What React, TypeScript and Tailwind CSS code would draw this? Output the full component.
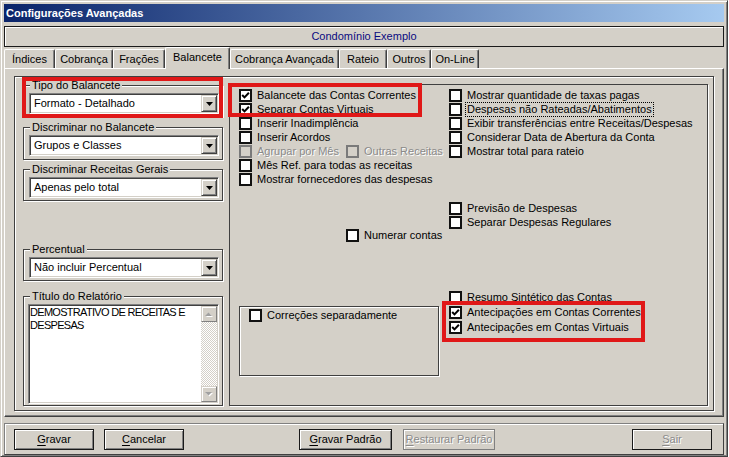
import React from 'react';

type RowProps = { label: string; checked?: boolean; disabled?: boolean; focus?: boolean; className?: string };

function Check({ checked = false, disabled = false }: { checked?: boolean; disabled?: boolean }) {
  return (
    <span
      className={
        disabled
          ? 'relative block w-[13px] h-[13px] shrink-0 border-2 border-[#7a7a7a] bg-[#d4d0c8]'
          : 'relative block w-[13px] h-[13px] shrink-0 border-2 border-[#111111] bg-white'
      }
    >
      {checked && (
        <svg viewBox="0 0 9 9" width="9" height="9" className="absolute left-0 top-0">
          <path d="M1.2 4 L3.5 6.4 L7.9 1.8" stroke="#000" strokeWidth="2" fill="none" />
        </svg>
      )}
    </span>
  );
}

function Row({ label, checked, disabled, focus, className = '' }: RowProps) {
  return (
    <div className={`flex items-center h-[14px] gap-[5px] whitespace-nowrap ${className}`}>
      <Check checked={checked} disabled={disabled} />
      {disabled ? (
        <span className="text-[#8a8a8a] [text-shadow:1px_1px_0_#ffffff]">{label}</span>
      ) : focus ? (
        <span className="outline-1 outline-dotted outline-[#000000] px-[1px] -ml-[1px] leading-[13px]">{label}</span>
      ) : (
        <span>{label}</span>
      )}
    </div>
  );
}

function Group({ label, className = '', children }: { label: string; className?: string; children?: React.ReactNode }) {
  return (
    <fieldset className={`shrink-0 border border-[#404040] shadow-[inset_1px_1px_0_#ffffff,1px_1px_0_#ffffff] ${className}`}>
      <legend className="ml-[6px] px-[2px] leading-[13px] bg-[#d4d0c8]">{label}</legend>
      {children}
    </fieldset>
  );
}

function ArrowBtn() {
  return (
    <div className="w-[16px] h-[17px] shrink-0 bg-[#d4d0c8] border border-t-[#d4d0c8] border-l-[#d4d0c8] border-r-[#404040] border-b-[#404040] shadow-[inset_1px_1px_0_#ffffff,inset_-1px_-1px_0_#808080] flex items-center justify-center">
      <svg width="7" height="4" viewBox="0 0 7 4">
        <polygon points="0,0 7,0 3.5,4" fill="#000" />
      </svg>
    </div>
  );
}

function Combo({ value }: { value: string }) {
  return (
    <div className="ml-[5px] mt-[1px] w-[190px] h-[21px] flex items-center bg-white border border-t-[#808080] border-l-[#808080] border-r-white border-b-white shadow-[inset_1px_1px_0_#404040,inset_-1px_-1px_0_#d4d0c8] p-[1px]">
      <span className="flex-1 pl-[3px] leading-[13px] whitespace-nowrap">{value}</span>
      <ArrowBtn />
    </div>
  );
}

function ScrollBtn({ up = false }: { up?: boolean }) {
  return (
    <div className="w-[16px] h-[16px] shrink-0 bg-[#d4d0c8] border border-t-[#d4d0c8] border-l-[#d4d0c8] border-r-[#808080] border-b-[#808080] shadow-[inset_1px_1px_0_#ffffff] flex items-center justify-center">
      <svg width="8" height="5" viewBox="0 0 8 5">
        {up ? (
          <>
            <polygon points="1,5 8,5 4.5,1.5" fill="#ffffff" />
            <polygon points="0,4 7,4 3.5,0.5" fill="#a0a0a0" />
          </>
        ) : (
          <>
            <polygon points="1,1 8,1 4.5,4.5" fill="#ffffff" />
            <polygon points="0,0 7,0 3.5,3.5" fill="#a0a0a0" />
          </>
        )}
      </svg>
    </div>
  );
}

function Tab({ label, w, selected = false }: { label: string; w: string; selected?: boolean }) {
  return (
    <div
      className={
        selected
          ? `${w} h-[22px] -mb-[1px] pb-[3px] relative z-10 bg-[#d4d0c8] flex items-center justify-center border-l border-t border-r border-l-white border-t-white border-r-[#404040] shadow-[inset_-1px_0_0_#808080] rounded-t-[2px] whitespace-nowrap`
          : `${w} h-[19px] flex items-center justify-center border-l border-t border-r border-l-white border-t-white border-r-[#404040] shadow-[inset_-1px_0_0_#808080] rounded-t-[2px] whitespace-nowrap`
      }
    >
      {label}
    </div>
  );
}

function Btn({ className = '', disabled = false, u, rest }: { className?: string; disabled?: boolean; u: string; rest: string }) {
  return (
    <div
      className={
        disabled
          ? `${className} h-[21px] shrink-0 flex items-center justify-center border border-[#808080] shadow-[inset_1px_1px_0_#ffffff] text-[#8a8a8a] [text-shadow:1px_1px_0_#ffffff] whitespace-nowrap`
          : `${className} h-[21px] shrink-0 flex items-center justify-center border border-[#1a1a1a] shadow-[inset_1px_1px_0_#ffffff,inset_-1px_-1px_0_#808080] whitespace-nowrap`
      }
    >
      <span>
        <span className="underline underline-offset-[2px]">{u}</span>
        {rest}
      </span>
    </div>
  );
}

export default function App() {
  return (
    <div className="w-[729px] h-[457px] bg-white text-[11px] leading-[13px] text-black font-['Liberation_Sans',Arial,sans-serif]">
      <div className="relative w-[728px] h-[457px] bg-[#d4d0c8] border border-t-[#d4d0c8] border-l-[#d4d0c8] border-r-[#404040] border-b-[#404040] shadow-[inset_1px_1px_0_#ffffff,inset_-1px_-1px_0_#808080] px-[3px] pt-[3px] flex flex-col">
        {/* Title bar */}
        <div className="h-[18px] shrink-0 flex items-center pl-[2px] text-white font-bold bg-[linear-gradient(to_right,#0a246a,#a6caf0)]">
          Configurações Avançadas
        </div>

        {/* Header */}
        <div className="mt-[4px] h-[21px] shrink-0 border border-[#1a1a1a] shadow-[inset_1px_1px_0_#ffffff] flex items-center justify-center text-[#0a0a80]">
          Condomínio Exemplo
        </div>

        {/* Tabs */}
        <div className="h-[21px] shrink-0 flex items-end relative z-10">
          <Tab label="Índices" w="w-[51px]" />
          <Tab label="Cobrança" w="w-[58px]" />
          <Tab label="Frações" w="w-[52px]" />
          <Tab label="Balancete" w="w-[65px]" selected />
          <Tab label="Cobrança Avançada" w="w-[109px]" />
          <Tab label="Rateio" w="w-[48px]" />
          <Tab label="Outros" w="w-[44px]" />
          <Tab label="On-Line" w="w-[48px]" />
        </div>

        {/* Tab panel */}
        <div className="h-[349px] shrink-0 border border-t-white border-l-white border-r-[#404040] border-b-[#404040] shadow-[inset_-1px_-1px_0_#808080] pl-[9px] pr-[9px] pt-[7px] pb-[5px]">
          <div className="h-full border border-[#404040] shadow-[inset_1px_1px_0_#ffffff,1px_1px_0_#ffffff] flex items-start pl-[8px] pr-[5px]">
            {/* Left column */}
            <div className="w-[200px] shrink-0 flex flex-col">
              <Group label="Tipo do Balancete" className="mt-[2px] h-[38px]">
                <Combo value="Formato - Detalhado" />
              </Group>
              <Group label="Discriminar no Balancete" className="mt-[4px] h-[39px]">
                <Combo value="Grupos e Classes" />
              </Group>
              <Group label="Discriminar Receitas Gerais" className="mt-[3px] h-[38px]">
                <Combo value="Apenas pelo total" />
              </Group>
              <Group label="Percentual" className="mt-[42px] h-[38px]">
                <Combo value="Não incluir Percentual" />
              </Group>
              <Group label="Título do Relatório" className="mt-[9px] h-[116px]">
                <div className="ml-[4px] mt-[1px] w-[191px] h-[100px] bg-white border border-t-[#808080] border-l-[#808080] border-r-white border-b-white shadow-[inset_1px_1px_0_#404040,inset_-1px_-1px_0_#d4d0c8] p-[1px] flex">
                  <div className="flex-1 leading-[13px] whitespace-nowrap tracking-[-0.7px]">
                    DEMOSTRATIVO DE RECEITAS E
                    <br />
                    DESPESAS
                  </div>
                  <div className="w-[16px] shrink-0 flex flex-col bg-[repeating-conic-gradient(#d4d0c8_0%_25%,#ffffff_0%_50%)] bg-[length:2px_2px]">
                    <ScrollBtn up />
                    <div className="flex-1" />
                    <ScrollBtn />
                  </div>
                </div>
              </Group>
            </div>

            {/* Right panel */}
            <div className="ml-[6px] mt-[7px] w-[479px] h-[322px] shrink-0 border border-[#404040] shadow-[1px_1px_0_#ffffff] flex pl-[9px] pt-[3px]">
              <div className="w-[210px] shrink-0 flex flex-col">
                <Row label="Balancete das Contas Correntes" checked />
                <Row label="Separar Contas Virtuais" checked />
                <Row label="Inserir Inadimplência" />
                <Row label="Inserir Acordos" />
                <div className="flex items-center h-[14px]">
                  <Row label="Agrupar por Mês" disabled className="w-[107px]" />
                  <Row label="Outras Receitas" disabled />
                </div>
                <Row label="Mês Ref. para todas as receitas" />
                <Row label="Mostrar fornecedores das despesas" />
                <Row label="Numerar contas" className="ml-[107px] mt-[42px]" />
                <div className="mt-[64px] w-[200px] h-[70px] border border-[#404040] shadow-[inset_1px_1px_0_#ffffff,1px_1px_0_#ffffff] pl-[9px] pt-[1px]">
                  <Row label="Correções separadamente" />
                </div>
              </div>
              <div className="flex-1 flex flex-col">
                <Row label="Mostrar quantidade de taxas pagas" />
                <Row label="Despesas não Rateadas/Abatimentos" focus />
                <Row label="Exibir transferências entre Receitas/Despesas" />
                <Row label="Considerar Data de Abertura da Conta" />
                <Row label="Mostrar total para rateio" />
                <Row label="Previsão de Despesas" className="mt-[43px]" />
                <Row label="Separar Despesas Regulares" />
                <Row label="Resumo Sintético das Contas" className="mt-[61px]" />
                <Row label="Antecipações em Contas Correntes" checked className="mt-[1px]" />
                <Row label="Antecipações em Contas Virtuais" checked className="mt-[1px]" />
              </div>
            </div>
          </div>
        </div>

        {/* Button bar */}
        <div className="mt-[6px] h-[32px] shrink-0 border border-t-[#808080] border-l-[#808080] border-r-[#404040] border-b-[#404040] shadow-[inset_1px_1px_0_#ffffff] flex items-start pt-[5px] pl-[9px] pr-[11px]">
          <Btn className="w-[80px]" u="G" rest="ravar" />
          <Btn className="ml-[10px] w-[80px]" u="C" rest="ancelar" />
          <Btn className="ml-[115px] w-[93px]" u="G" rest="ravar Padrão" />
          <Btn className="ml-[11px] w-[92px]" u="R" rest="estaurar Padrão" disabled />
          <Btn className="ml-auto w-[80px] !border-[#1a1a1a]" u="S" rest="air" disabled />
        </div>

        {/* Red annotation boxes */}
        <div className="absolute left-[21px] top-[76px] w-[201px] h-[41px] border-4 border-[#e01818] pointer-events-none" />
        <div className="absolute left-[227px] top-[82px] w-[194px] h-[34px] border-4 border-[#e01818] pointer-events-none" />
        <div className="absolute left-[441px] top-[300px] w-[203px] h-[41px] border-4 border-[#e01818] pointer-events-none" />
      </div>
    </div>
  );
}
